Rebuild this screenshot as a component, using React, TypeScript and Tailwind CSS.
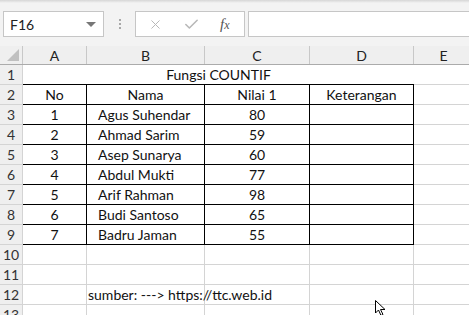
import { X, Check } from 'lucide-react'

const cols = [
  { label: 'A', w: 64 },
  { label: 'B', w: 118 },
  { label: 'C', w: 105 },
  { label: 'D', w: 104 },
  { label: 'E', w: 60 },
]

const data = [
  ['1', 'Agus Suhendar', '80'],
  ['2', 'Ahmad Sarim', '59'],
  ['3', 'Asep Sunarya', '60'],
  ['4', 'Abdul Mukti', '77'],
  ['5', 'Arif Rahman', '98'],
  ['6', 'Budi Santoso', '65'],
  ['7', 'Badru Jaman', '55'],
]

const font = { fontFamily: 'Lato, "Open Sans", sans-serif' }

function Toolbar() {
  return (
    <div className="h-[46px] bg-[#f3f3f3] relative">
      <div className="h-[3px] bg-gradient-to-b from-[#d6d6d6] to-[#f3f3f3]" />
      <div className="flex items-center pt-[7px] pl-[3px] h-[35px]">
        <div className="w-[101px] h-[26px] bg-white border border-[#c6c6c6] flex items-center justify-between pl-[6px] pr-[7px]">
          <span className="text-[14px] text-[#222]">F16</span>
          <div className="w-0 h-0 border-l-[5px] border-r-[5px] border-t-[5px] border-l-transparent border-r-transparent border-t-[#777]" />
        </div>
        <div className="w-[31px] flex flex-col items-center gap-[2px]">
          <div className="w-[2px] h-[2px] bg-[#a8a8a8]" />
          <div className="w-[2px] h-[2px] bg-[#a8a8a8]" />
          <div className="w-[2px] h-[2px] bg-[#a8a8a8]" />
        </div>
        <div className="w-[110px] h-[26px] bg-white border border-[#c6c6c6] flex items-center pl-[12px]">
          <X size={15} strokeWidth={1.6} className="text-[#b8b8b8]" />
          <Check size={17} strokeWidth={2.2} className="text-[#b8b8b8] ml-[20px]" />
          <span className="ml-[20px] text-[15px] italic text-[#555]" style={{ fontFamily: '"Liberation Serif", serif' }}>
            f<span className="text-[12px]">x</span>
          </span>
        </div>
        <div className="ml-[3px] flex-1 h-[26px] bg-white border border-[#c6c6c6] border-r-0" />
      </div>
    </div>
  )
}

function RowHead({ n }: { n: number }) {
  return (
    <div className="w-[23px] h-[20px] bg-[#efefef] border-r border-b border-[#d4d4d4] flex items-center justify-center text-[14px] text-[#333] shrink-0">
      {n}
    </div>
  )
}

export default function App() {
  return (
    <div className="w-[469px] h-[315px] overflow-hidden bg-white text-[#111]" style={font}>
      <Toolbar />
      {/* column headers */}
      <div className="flex h-[19px] bg-[#efefef] border-b border-[#ababab]">
        <div className="w-[23px] border-r border-[#c8c8c8] relative shrink-0">
          <div className="absolute right-[3px] bottom-[3px] w-0 h-0" style={{ borderBottom: '12px solid #c0c0c0', borderLeft: '12px solid transparent' }} />
        </div>
        {cols.map((c) => (
          <div key={c.label} style={{ width: c.w }} className="shrink-0 border-r border-[#c8c8c8] flex items-center justify-center text-[14px] text-[#222]">
            {c.label}
          </div>
        ))}
      </div>

      {/* row 1 */}
      <div className="flex h-[20px]">
        <RowHead n={1} />
        <div className="w-[391px] shrink-0 border-b border-black flex items-center justify-center text-[14px]">Fungsi COUNTIF</div>
        <div className="w-[60px] shrink-0 border-b border-[#d4d4d4]" />
      </div>

      {/* row 2 header */}
      <div className="flex h-[20px]">
        <RowHead n={2} />
        <div className="w-[64px] shrink-0 border-r border-b border-black flex items-center justify-center text-[14px]">No</div>
        <div className="w-[118px] shrink-0 border-r border-b border-black flex items-center justify-center text-[14px]">Nama</div>
        <div className="w-[105px] shrink-0 border-r border-b border-black flex items-center justify-center text-[14px]">Nilai 1</div>
        <div className="w-[104px] shrink-0 border-r border-b border-black flex items-center justify-center text-[14px]">Keterangan</div>
        <div className="w-[60px] shrink-0 border-b border-[#d4d4d4]" />
      </div>

      {data.map((r, i) => (
        <div key={i} className="flex h-[20px]">
          <RowHead n={i + 3} />
          <div className="w-[64px] shrink-0 border-r border-b border-black flex items-center justify-center text-[14px]">{r[0]}</div>
          <div className="w-[118px] shrink-0 border-r border-b border-black flex items-center pl-[11px] text-[14px]">{r[1]}</div>
          <div className="w-[105px] shrink-0 border-r border-b border-black flex items-center justify-center text-[14px]">{r[2]}</div>
          <div className="w-[104px] shrink-0 border-r border-b border-black" />
          <div className="w-[60px] shrink-0 border-b border-[#d4d4d4]" />
        </div>
      ))}

      {[10, 11, 12, 13].map((n) => (
        <div key={n} className="flex h-[20px]">
          <RowHead n={n} />
          <div className="w-[64px] shrink-0 border-r border-b border-[#d4d4d4]" />
          <div className="w-[118px] shrink-0 border-r border-b border-[#d4d4d4] relative">
            {n === 12 && (
              <span className="absolute left-[1px] top-0 h-[19px] flex items-center whitespace-nowrap text-[14px]">
                sumber: ---&gt; https://ttc.web.id
              </span>
            )}
          </div>
          <div className="w-[105px] shrink-0 border-r border-b border-[#d4d4d4]" />
          <div className="w-[104px] shrink-0 border-r border-b border-[#d4d4d4] relative">
            {n === 12 && (
              <svg className="absolute left-[65px] top-[15px]" width="12" height="16" viewBox="0 0 12 16">
                <path d="M0.5 0.5 L0.5 13 L3.5 10 L6 15.5 L8 14.5 L5.5 9.5 L10 9.5 Z" fill="white" stroke="black" strokeWidth="1" />
              </svg>
            )}
          </div>
          <div className="w-[60px] shrink-0 border-b border-[#d4d4d4]" />
        </div>
      ))}
    </div>
  )
}
